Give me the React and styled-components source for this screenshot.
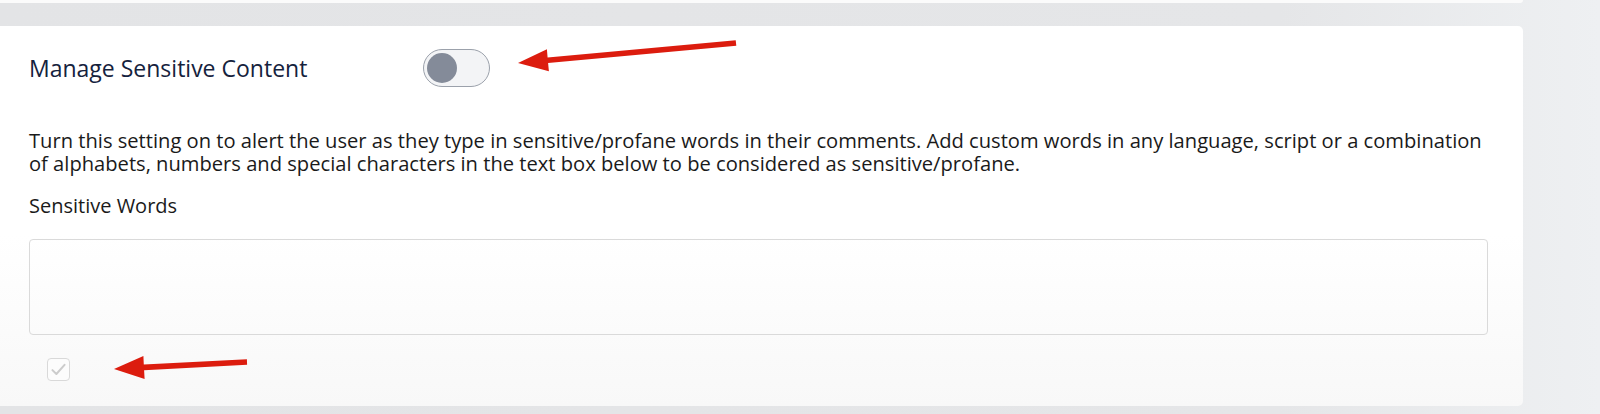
import React from "react";
import styled, { createGlobalStyle } from "styled-components";

const Global = createGlobalStyle`
  html, body { margin: 0; padding: 0; }
  body {
    background: linear-gradient(90deg, #e3e4e6 0%, #e5e6e8 80%, #eef0f2 100%);
    font-family: "Open Sans", "Noto Sans", sans-serif;
    width: 1600px;
    height: 414px;
    overflow: hidden;
  }
`;

const Page = styled.div`
  position: relative;
  width: 1600px;
  height: 414px;
  padding-right: 77px;
  box-sizing: border-box;
  display: flex;
  flex-direction: column;
  gap: 23px;
`;

const PrevPanel = styled.div`
  height: 3px;
  background: #fbfbfb;
  border-radius: 0 0 5px 0;
`;

const Card = styled.section`
  height: 380px;
  background: linear-gradient(180deg, #ffffff 0%, #ffffff 55%, #f8f8f8 100%);
  border-radius: 0 5px 5px 0;
  padding: 23px 35px 0 29px;
  box-sizing: border-box;
  display: flex;
  flex-direction: column;
`;

const HeaderRow = styled.div`
  display: flex;
  align-items: center;
  height: 38px;
`;

const Title = styled.h2`
  margin: 0;
  width: 394px;
  font-size: 23px;
  font-weight: 400;
  color: #15223d;
  white-space: nowrap;
`;

const Toggle = styled.button`
  width: 67px;
  height: 38px;
  padding: 0 0 0 3px;
  box-sizing: border-box;
  border: 1.5px solid #9ba1ab;
  border-radius: 19px;
  background: #f3f4f6;
  display: flex;
  align-items: center;
  cursor: pointer;
`;

const Knob = styled.span`
  width: 30px;
  height: 30px;
  border-radius: 50%;
  background: #848b99;
`;

const Description = styled.p`
  margin: 42px -14px 0 0;
  font-size: 20.15px;
  line-height: 22.5px;
  color: #1a1a1a;
`;

const FieldLabel = styled.label`
  display: block;
  margin-top: 21px;
  font-size: 20px;
  line-height: 22px;
  color: #1a1a1a;
`;

const WordsBox = styled.textarea`
  margin-top: 22px;
  width: 100%;
  height: 96px;
  box-sizing: border-box;
  border: 1.5px solid #dadada;
  border-radius: 4px;
  background: transparent;
  resize: none;
  font-family: inherit;
  font-size: 16px;
  outline: none;
`;

const CheckBox = styled.span`
  margin: 23px 0 0 18px;
  width: 23px;
  height: 23px;
  box-sizing: border-box;
  border: 1.5px solid #d9d9d9;
  border-radius: 4px;
  display: flex;
  align-items: center;
  justify-content: center;
  background: #fcfcfc;
`;

const Overlay = styled.svg`
  position: absolute;
  left: 0;
  top: 0;
  pointer-events: none;
`;

function arrowPoints(tail, tip, headLen, headHalf, shaftHalf) {
  const dx = tip[0] - tail[0];
  const dy = tip[1] - tail[1];
  const len = Math.hypot(dx, dy);
  const ux = dx / len, uy = dy / len;
  const nx = -uy, ny = ux;
  const bx = tip[0] - ux * headLen, by = tip[1] - uy * headLen;
  const p = (x, y) => `${x.toFixed(1)},${y.toFixed(1)}`;
  return [
    p(tail[0] + nx * shaftHalf, tail[1] + ny * shaftHalf),
    p(bx + nx * shaftHalf, by + ny * shaftHalf),
    p(bx + nx * headHalf, by + ny * headHalf),
    p(tip[0], tip[1]),
    p(bx - nx * headHalf, by - ny * headHalf),
    p(bx - nx * shaftHalf, by - ny * shaftHalf),
    p(tail[0] - nx * shaftHalf, tail[1] - ny * shaftHalf),
  ].join(" ");
}

export default function App() {
  return (
    <>
      <Global />
      <Page>
        <PrevPanel />
        <Card>
          <HeaderRow>
            <Title>Manage Sensitive Content</Title>
            <Toggle aria-label="Manage Sensitive Content">
              <Knob />
            </Toggle>
          </HeaderRow>
          <Description>
            Turn this setting on to alert the user as they type in sensitive/profane words in their comments. Add custom words in any language, script or a combination of alphabets, numbers and special characters in the text box below to be considered as sensitive/profane.
          </Description>
          <FieldLabel>Sensitive Words</FieldLabel>
          <WordsBox />
          <CheckBox>
            <svg width="17" height="17" viewBox="0 0 16 16">
              <path d="M2.3 8.6 L6 12.2 L13.7 3.6" fill="none" stroke="#cccccc" strokeWidth="1.9" strokeLinecap="round" strokeLinejoin="round" />
            </svg>
          </CheckBox>
        </Card>
        <Overlay width="1600" height="414">
          <polygon points={arrowPoints([736, 43], [518, 63], 30, 11, 2.8)} fill="#dc1c0e" />
          <polygon points={arrowPoints([247, 362], [114, 369], 30, 11.5, 2.8)} fill="#dc1c0e" />
        </Overlay>
      </Page>
    </>
  );
}
